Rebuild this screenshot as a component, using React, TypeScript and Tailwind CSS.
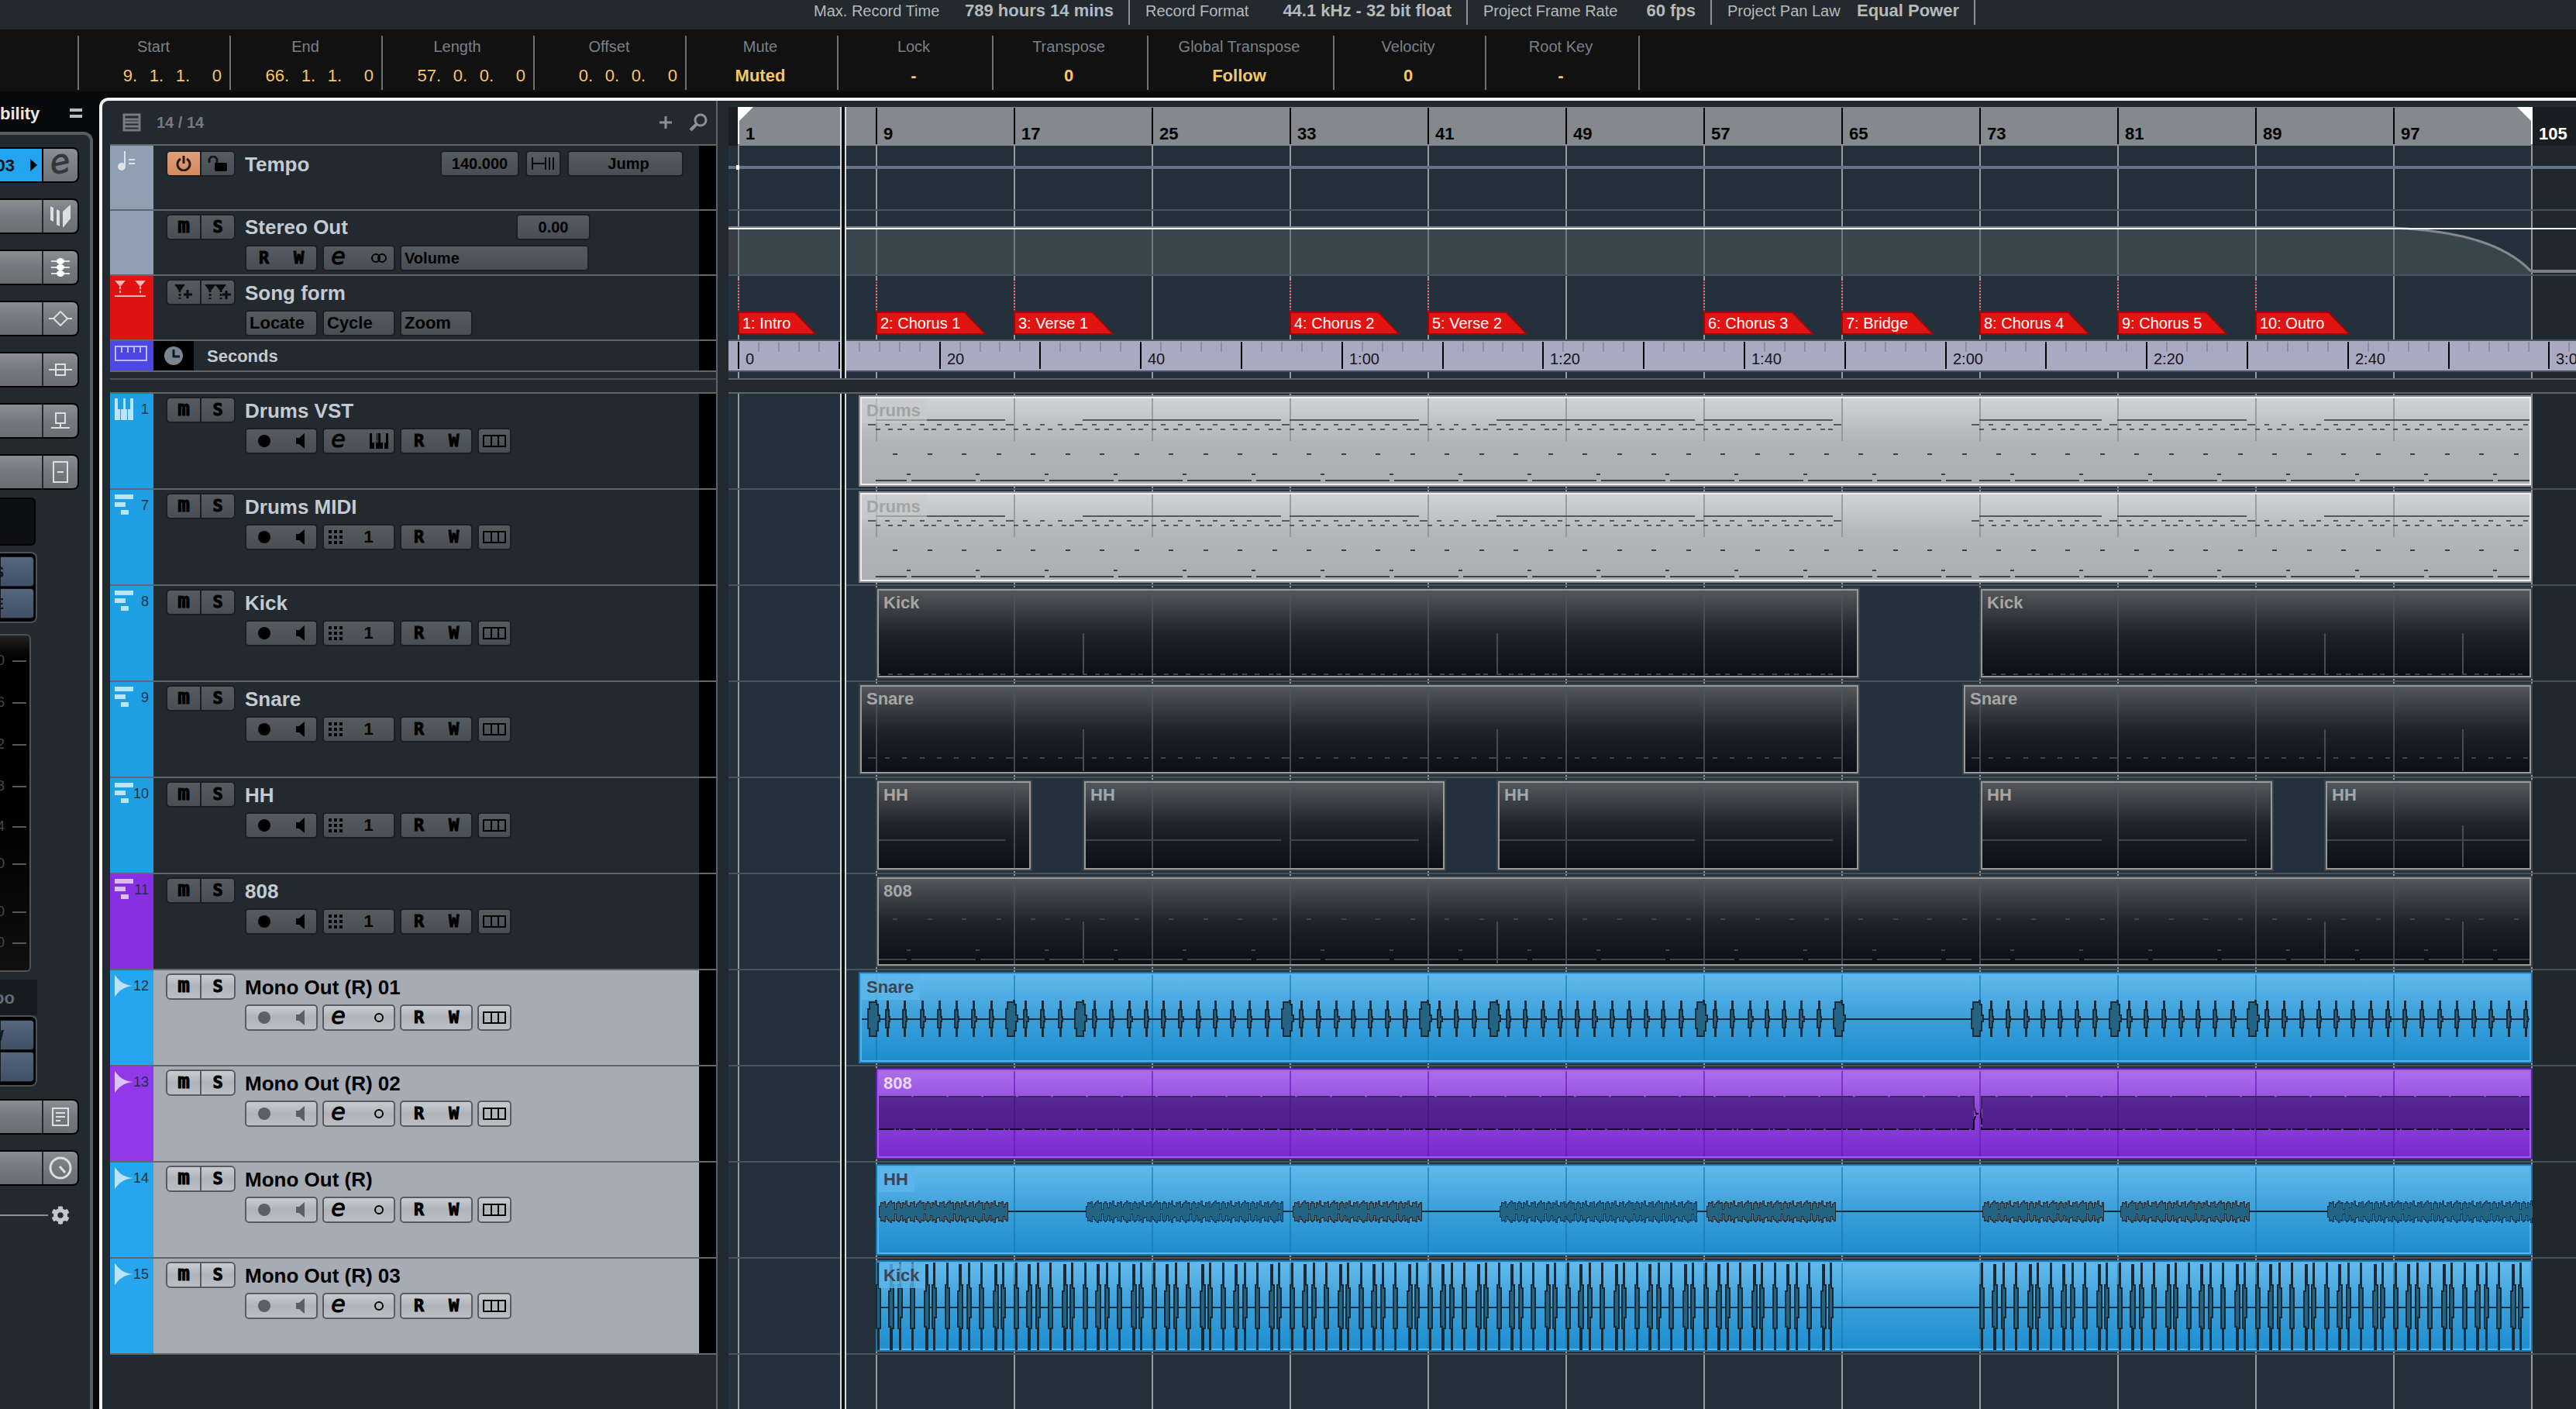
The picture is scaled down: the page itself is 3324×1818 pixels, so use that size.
// src/components/project/ProjectWindow.tsx
import type { ReactNode } from 'react'
import clsx from 'clsx'
import { FaCog } from 'react-icons/fa'

const BAR_WIDTH = 22.25
const ORIGIN = 12
const barX = (bar: number) => Math.round(ORIGIN + BAR_WIDTH * (bar - 1))
const BAR_MARKS = Array.from({ length: 14 }, (_, i) => 1 + i * 8)

type TrackKind = 'instrument' | 'midi' | 'audio'
type Pattern = 'drums' | 'kick' | 'snare' | 'hh' | '808'

interface ClipData {
  name: string
  from: number
  to: number
}

interface Track {
  id: number
  name: string
  kind: TrackKind
  purple?: boolean
  pattern: Pattern
  clips: ClipData[]
}

const tracks: Track[] = [
  { id: 1, name: 'Drums VST', kind: 'instrument', pattern: 'drums', clips: [{ name: 'Drums', from: 8, to: 105 }] },
  { id: 7, name: 'Drums MIDI', kind: 'midi', pattern: 'drums', clips: [{ name: 'Drums', from: 8, to: 105 }] },
  { id: 8, name: 'Kick', kind: 'midi', pattern: 'kick', clips: [{ name: 'Kick', from: 9, to: 66 }, { name: 'Kick', from: 73, to: 105 }] },
  { id: 9, name: 'Snare', kind: 'midi', pattern: 'snare', clips: [{ name: 'Snare', from: 8, to: 66 }, { name: 'Snare', from: 72, to: 105 }] },
  {
    id: 10, name: 'HH', kind: 'midi', pattern: 'hh',
    clips: [
      { name: 'HH', from: 9, to: 18 },
      { name: 'HH', from: 21, to: 42 },
      { name: 'HH', from: 45, to: 66 },
      { name: 'HH', from: 73, to: 90 },
      { name: 'HH', from: 93, to: 105 },
    ],
  },
  { id: 11, name: '808', kind: 'midi', purple: true, pattern: '808', clips: [{ name: '808', from: 9, to: 105 }] },
  { id: 12, name: 'Mono Out (R) 01', kind: 'audio', pattern: 'snare', clips: [{ name: 'Snare', from: 8, to: 105 }] },
  { id: 13, name: 'Mono Out (R) 02', kind: 'audio', purple: true, pattern: '808', clips: [{ name: '808', from: 9, to: 105 }] },
  { id: 14, name: 'Mono Out (R)', kind: 'audio', pattern: 'hh', clips: [{ name: 'HH', from: 9, to: 105 }] },
  { id: 15, name: 'Mono Out (R) 03', kind: 'audio', pattern: 'kick', clips: [{ name: 'Kick', from: 9, to: 105 }] },
]

const markers = [
  { bar: 1, label: '1: Intro' },
  { bar: 9, label: '2: Chorus 1' },
  { bar: 17, label: '3: Verse 1' },
  { bar: 33, label: '4: Chorus 2' },
  { bar: 41, label: '5: Verse 2' },
  { bar: 57, label: '6: Chorus 3' },
  { bar: 65, label: '7: Bridge' },
  { bar: 73, label: '8: Chorus 4' },
  { bar: 81, label: '9: Chorus 5' },
  { bar: 89, label: '10: Outro' },
]

const SECOND_LABELS = ['0', '20', '40', '1:00', '1:20', '1:40', '2:00', '2:20', '2:40', '3:00']

/* ---------- note and waveform data ---------- */

type Seg = [number, number]

const FILL_BARS = [8, 16, 20, 32, 40, 44, 56, 64, 72, 80, 88]
const SNARE_BARS = Array.from({ length: 97 }, (_, i) => i + 8).filter((b) => b <= 64 || b >= 72)
const HH_SEGMENTS: Seg[] = [[9, 16.5], [21, 32.5], [33, 40.5], [45, 56.5], [57, 64.5], [73, 80.1], [81, 88.5], [93, 105]]
const KICK_OFFSETS = [0, 16, 28, 44, 62, 72]

const snareNotes: Seg[] = SNARE_BARS.map((b) => [barX(b) + 12, FILL_BARS.includes(b) ? 10 : 6])
const kickNotes: Seg[] = Array.from({ length: 24 }, (_, i) => 9 + i * 4)
  .filter((b) => b < 65 || b >= 73)
  .flatMap((b) => KICK_OFFSETS.map((o): Seg => [barX(b) + o, 6]))
const hhNotes: Seg[] = HH_SEGMENTS.map(([a, b]) => [barX(a), barX(b) - barX(a)])
const subHigh: Seg[] = Array.from({ length: 48 }, (_, i) => [barX(9 + i * 2) + 22, 6])
const subMid: Seg[] = Array.from({ length: 24 }, (_, i) => [barX(9 + i * 4) + 40, 5])
const subLow: Seg[] = Array.from({ length: 24 }, (_, i) => 9 + i * 4).flatMap((b): Seg[] => [
  [barX(b), 40],
  [barX(b) + 46, b === 69 ? 33 : 43],
])

const noteRows: Record<Pattern, { y: number; notes: Seg[] }[]> = {
  drums: [
    { y: 30, notes: hhNotes },
    { y: 36, notes: snareNotes },
    { y: 42, notes: kickNotes },
    { y: 74, notes: subHigh },
    { y: 100, notes: subMid },
    { y: 108, notes: subLow },
  ],
  kick: [{ y: 110, notes: kickNotes }],
  snare: [{ y: 94, notes: snareNotes }],
  hh: [{ y: 76, notes: hhNotes }],
  '808': [
    { y: 54, notes: subHigh },
    { y: 94, notes: subMid },
    { y: 106, notes: subLow },
  ],
}

function rowPath(notes: Seg[], y: number, left: number, right: number) {
  return notes
    .filter(([x, w]) => x + w > left + 4 && x < right - 4)
    .map(([x, w]) => {
      const a = Math.max(x, left + 4)
      const b = Math.min(x + w, right - 4)
      return `M${a - left} ${y}H${b - left}v2H${a - left}z`
    })
    .join('')
}

function snareWave(left: number) {
  return SNARE_BARS.map((b, i) => {
    const x = barX(b) - left
    if (FILL_BARS.includes(b)) {
      return `M${x + 12} 48H${x + 14}V39H${x + 22}V37H${x + 23}V42H${x + 25}V56H${x + 27}V64H${x + 25}V76H${x + 23}V83H${x + 14}V73H${x + 12}z`
    }
    const t = x + 13
    const tail = i % 3 === 0 ? 5 : 4
    return `M${t} 49H${t + 2}V38H${t + 3}V49H${t + 4}V58H${t + tail + 1}V64H${t + 4}V72H${t + 3}V83H${t + 2}V72H${t}z`
  }).join('')
}

function kickWave(left: number) {
  return kickNotes
    .map(([nx], i) => {
      const x = nx + 1 - left
      const side = i % 3
      return side === 1
        ? `M${x} 40H${x + 2}V6H${x + 4}V32H${x + 6}V88H${x + 4}V115H${x + 2}V86H${x}z`
        : `M${x} 32H${x + 2}V4H${x + 3}V36H${x + 5}V${side ? 74 : 88}H${x + 3}V115H${x + 2}V88H${x}z`
    })
    .join('')
}

// outline made of short uneven steps, repeated every 38px
function hatWave(left: number) {
  const steps = [7, 12, 11, 13, 6, 10, 12, 14, 11, 12, 3, 11, 13, 11, 5, 12, 10, 14, 8]
  return HH_SEGMENTS.map(([a, b]) => {
    const x0 = barX(a) - left + 4
    const x1 = barX(b) - left + 2
    let top = `M${x0} 61`
    let bottom = ''
    for (let x = x0, i = 0; x < x1; x += 2, i++) {
      const h = steps[i % steps.length]
      top += `V${61 - h}H${x + 2}`
      bottom = `V${61 + h}H${x}` + bottom
    }
    return top + bottom + 'z'
  }).join('')
}

function Waveform({ pattern, left, width }: { pattern: Pattern; left: number; width: number }) {
  if (pattern === '808') {
    const gap = barX(73) - left
    return (
      <g>
        <path d={`M4 37H${gap - 7}V79H4z M${gap + 4} 37H${width - 4}V79H${gap + 4}z`} fill="#2c0d5c" fillOpacity="0.6" />
        <path d={`M4 37H${gap - 7}V50l3 9h6l1 -12V37H${width - 4}`} fill="none" stroke="#3b2a52" strokeWidth="2" strokeDasharray="42 3" />
        <path d={`M4 79H${gap - 7}V68l3 -9h6l1 12V79H${width - 4}`} fill="none" stroke="#170829" strokeWidth="2" strokeDasharray="20 2 4 2 16 3" />
      </g>
    )
  }
  const d = pattern === 'snare' ? snareWave(left) : pattern === 'kick' ? kickWave(left) : hatWave(left)
  return (
    <g>
      <path d={`M4 60H${width - 4}v2H4z`} fill="#1b2a34" />
      <path d={d} fill="#236484" stroke="#1a2a34" strokeWidth={pattern === 'hh' ? 1 : 2} />
    </g>
  )
}

const clipTheme = {
  light: {
    box: 'bg-linear-to-b from-[#d3d5d6] via-[#b3b4b6] to-[#abadb0] shadow-[inset_0_0_0_2px_#8b8d90,inset_0_0_0_4px_#eceeef]',
    text: 'text-[#a3a3a3]',
    line: '#8f9294',
  },
  dark: {
    box: 'bg-linear-to-b from-[#585c60] via-[#1f242a] to-[#0a0e14] shadow-[inset_0_0_0_2px_#3f4143,inset_0_0_0_4px_#98999b]',
    text: 'text-[#a6a6a6]',
    line: '#4a5664',
  },
  blue: {
    box: 'bg-linear-to-b from-[#65bbed] via-[#3a9fd9] via-50% to-[#1a8dcf] shadow-[inset_0_0_0_2px_#1d77a8,inset_0_0_0_4px_#52b5ef]',
    text: 'text-[#3f444a]',
    line: '#1474a8',
  },
  purple: {
    box: 'bg-linear-to-b from-[#ae70ee] via-[#8d42da] via-50% to-[#7828cc] shadow-[inset_0_0_0_2px_#5f22a0,inset_0_0_0_4px_#a45cf0]',
    text: 'text-[#e9dcf8]',
    line: '#6414b8',
  },
}

function Clip({ clip, track }: { clip: ClipData; track: Track }) {
  const left = barX(clip.from)
  const width = barX(clip.to) - left + 2
  const audio = track.kind === 'audio'
  const themeName = audio ? (track.purple ? 'purple' : 'blue') : track.pattern === 'drums' ? 'light' : 'dark'
  const theme = clipTheme[themeName]
  const noteColor = themeName === 'light' ? '#3c4043' : '#414448'
  const inner = BAR_MARKS.filter((b) => b > clip.from && b < clip.to)
  const sections = [21, 45, 93, 101].filter((b) => b > clip.from && b < clip.to)

  return (
    <div className={clsx('absolute top-[2px] h-[118px] overflow-hidden p-1', theme.box)} style={{ left, width }}>
      <svg width={width} height="118" className="absolute inset-0" shapeRendering="crispEdges" aria-hidden="true">
        {inner.map((b) => (
          <rect key={b} x={barX(b) - left} y="4" width="2" height={themeName === 'light' ? 55 : 110} fill={theme.line} fillOpacity={audio ? 0.6 : 0.8} />
        ))}
        {themeName === 'dark' &&
          sections.map((b) => <rect key={b} x={barX(b) - left} y="59" width="2" height="54" fill="#4a4b4e" />)}
        {audio ? (
          <Waveform pattern={track.pattern} left={left} width={width} />
        ) : (
          noteRows[track.pattern].map((row) => (
            <path key={row.y} d={rowPath(row.notes, row.y + 1, left, left + width)} fill={noteColor} fillOpacity={row.y < 50 && themeName === 'light' ? 0.8 : 1} />
          ))
        )}
      </svg>
      <span
        className={clsx(
          'relative inline-block pt-1 pr-2 pb-1 pl-1.5 text-[22px] leading-6 font-bold',
          themeName === 'blue' && 'bg-[#5ab5ea]/80',
          themeName === 'light' && 'bg-[#c8cacc]/60',
          theme.text,
        )}
      >
        {clip.name}
      </span>
    </div>
  )
}

/* ---------- icons ---------- */

function Icon({ w, h, children, className }: { w: number; h: number; children: ReactNode; className?: string }) {
  return (
    <svg width={w} height={h} viewBox={`0 0 ${w} ${h}`} fill="none" className={clsx('shrink-0', className)} aria-hidden="true">
      {children}
    </svg>
  )
}

const RecordIcon = () => (
  <Icon w={18} h={18}><circle cx="9" cy="9" r="8" fill="currentColor" /></Icon>
)
const MonitorIcon = () => (
  <Icon w={12} h={20}><path d="M0 6h4L11 0v20L4 14H0z" fill="currentColor" /></Icon>
)
const KeysIcon = () => (
  <Icon w={24} h={20}><path d="M0 0h3v12h3v8H0zM9 0h1v12h-1zM8 12h3V0h3v12h3v8H8zM19 12h2V0h3v20h-5z" fill="currentColor" /></Icon>
)
const GridIcon = () => (
  <Icon w={18} h={18}>
    <path d="M0 0h4v4H0zM7 0h4v4H7zM14 0h4v4h-4zM0 7h4v4H0zM7 7h4v4H7zM14 7h4v4h-4zM0 14h4v4H0zM7 14h4v4H7zM14 14h4v4h-4z" fill="currentColor" />
  </Icon>
)
const MonoIcon = () => (
  <Icon w={14} h={14}><circle cx="7" cy="7" r="5" stroke="currentColor" strokeWidth="2" /></Icon>
)
const StereoIcon = () => (
  <Icon w={22} h={14}>
    <circle cx="7" cy="7" r="5" stroke="currentColor" strokeWidth="2" />
    <circle cx="15" cy="7" r="5" stroke="currentColor" strokeWidth="2" />
  </Icon>
)
const LanesIcon = () => (
  <Icon w={30} h={16}><path d="M1 1h28v14H1zM11 1v14M20 1v14" stroke="currentColor" strokeWidth="2" /></Icon>
)

function StripIcon({ kind }: { kind: TrackKind }) {
  if (kind === 'instrument') {
    return (
      <Icon w={24} h={28}>
        <path d="M0 0h4v14h3v14H0zM8 14h3V0h3v14h2v14H8zM20 0h4v28h-7V14h3z" fill="currentColor" />
      </Icon>
    )
  }
  if (kind === 'midi') {
    return (
      <Icon w={24} h={28}><path d="M0 0h24v6H0zM0 10h14v6H0zM8 20h10v6H8z" fill="currentColor" /></Icon>
    )
  }
  return (
    <Icon w={24} h={28}><path d="M0 0C6 8 12 13 24 14C12 15 6 20 0 28z" fill="currentColor" /></Icon>
  )
}

const EditGlyph = ({ large }: { large?: boolean }) => (
  <span className={clsx("-rotate-12 font-['DejaVu_Sans'] italic [-webkit-text-stroke:1px]", large ? 'pb-2 text-[42px] leading-8' : 'pb-1 text-[30px] leading-6')}>e</span>
)

/* ---------- small controls ---------- */

const darkBox = 'border-2 border-[#1b1f23] bg-linear-to-b from-[#565b60] to-[#484e54] text-black'
const lightBox = 'border-2 border-[#595d62] bg-linear-to-b from-[#c9cdd2] via-[#b0b4b9] to-[#bcc0c5] text-black'

const Glyph = ({ children }: { children: string }) => (
  <span className={clsx("font-['DejaVu_Sans_Mono'] leading-6 font-bold [-webkit-text-stroke:1px]", children === 'm' ? 'pb-1 text-[26px]' : 'text-[22px]')}>{children}</span>
)

function PairButtons({ light, labels, children }: { light?: boolean; labels: [string, string]; children: [ReactNode, ReactNode] }) {
  return (
    <div className={clsx('flex h-[34px] w-[90px] shrink-0 rounded-md', light ? lightBox : darkBox)}>
      <button aria-label={labels[0]} className={clsx('flex flex-1 items-center justify-center border-r-2', light ? 'border-[#595d62]' : 'border-[#1b1f23]')}>
        {children[0]}
      </button>
      <button aria-label={labels[1]} className="flex flex-1 items-center justify-center">{children[1]}</button>
    </div>
  )
}

function ControlGroup({ light, labels, children }: { light?: boolean; labels: string[]; children: ReactNode[] }) {
  return (
    <div className={clsx('flex h-[34px] w-[94px] shrink-0 rounded-[5px]', light ? lightBox : darkBox)}>
      {children.map((child, i) => (
        <button key={i} aria-label={labels[i]} className="flex flex-1 items-center justify-center">{child}</button>
      ))}
    </div>
  )
}

function MuteSolo({ light }: { light?: boolean }) {
  return (
    <PairButtons light={light} labels={['Mute', 'Solo']}>
      <Glyph>m</Glyph>
      <Glyph>S</Glyph>
    </PairButtons>
  )
}

/* ---------- top bars ---------- */

const statusItems = [
  { label: 'Max. Record Time', value: '789 hours 14 mins', box: 'w-[408px]' },
  { label: 'Record Format', value: '44.1 kHz - 32 bit float', box: 'w-[436px]' },
  { label: 'Project Frame Rate', value: '60 fps', box: 'w-[315px]' },
  { label: 'Project Pan Law', value: 'Equal Power', box: 'w-[340px]' },
]

function StatusLine() {
  return (
    <div className="flex h-[38px] shrink-0 bg-[#23292d] pl-[1050px] text-[#b5babd]">
      {statusItems.map((item) => (
        <div key={item.label} className={clsx('flex h-8 items-start justify-between border-r-2 border-[#8b9094] pr-[19px] pl-5 leading-7 whitespace-nowrap first:pl-0', item.box)}>
          <span className="text-[20px]">{item.label}</span>
          <span className="text-[22px] font-bold">{item.value}</span>
        </div>
      ))}
    </div>
  )
}

const positionItems = [
  { label: 'Start', value: ['9.', '1.', '1.', '0'] },
  { label: 'End', value: ['66.', '1.', '1.', '0'] },
  { label: 'Length', value: ['57.', '0.', '0.', '0'] },
  { label: 'Offset', value: ['0.', '0.', '0.', '0'] },
]

const infoItems = [
  { label: 'Mute', value: 'Muted', box: 'w-[196px]' },
  { label: 'Lock', value: '-', box: 'w-[200px]' },
  { label: 'Transpose', value: '0', box: 'w-[200px]' },
  { label: 'Global Transpose', value: 'Follow', box: 'w-[240px]' },
  { label: 'Velocity', value: '0', box: 'w-[196px]' },
  { label: 'Root Key', value: '-', box: 'w-[200px]' },
]

function InfoLine() {
  return (
    <div className="flex h-20 shrink-0 bg-[#111111] pt-2 pl-[100px] whitespace-nowrap">
      {positionItems.map((item) => (
        <div key={item.label} className="h-[70px] w-[196px] border-l-2 border-[#6c7278] pr-2.5">
          <div className="pl-2 text-center text-[20px] leading-7 text-[#7a8289]">{item.label}</div>
          <div className="mt-2.5 flex justify-end text-right text-[22px] leading-7 text-[#f6c667]">
            {item.value.map((part, i) => (
              <span key={i} className={i === 3 ? 'w-[41px]' : 'w-[34px]'}>{part}</span>
            ))}
          </div>
        </div>
      ))}
      {infoItems.map((item) => (
        <div key={item.label} className={clsx('h-[70px] border-l-2 border-[#6c7278] pr-1 text-center last:border-r-2', item.box)}>
          <div className="text-[20px] leading-7 text-[#7a8289]">{item.label}</div>
          <div className="mt-2.5 text-[22px] leading-7 font-bold text-[#f6c667]">{item.value}</div>
        </div>
      ))}
    </div>
  )
}

/* ---------- inspector ---------- */

const inspectorIcons: { name: string; icon: ReactNode }[] = [
  {
    name: 'Expression',
    icon: <Icon w={28} h={30}><path d="M1 2l4 2v18l-4-2zM9 6l4 2v20l-4-2zM17 9L27 0v18L17 30z" fill="currentColor" /></Icon>,
  },
  {
    name: 'Equalizers',
    icon: (
      <Icon w={24} h={26}>
        <path d="M0 5h24M0 13h24M0 21h24" stroke="currentColor" strokeWidth="2" />
        <g fill="#fff">
          <ellipse cx="12" cy="5" rx="5" ry="4" />
          <ellipse cx="12" cy="13" rx="5" ry="4" />
          <ellipse cx="12" cy="21" rx="5" ry="4" />
        </g>
      </Icon>
    ),
  },
  {
    name: 'Inserts',
    icon: <Icon w={30} h={20}><path d="M0 10h6M24 10h6M15 1l9 9-9 9-9-9z" stroke="currentColor" strokeWidth="2" /></Icon>,
  },
  {
    name: 'Sends',
    icon: <Icon w={30} h={18}><path d="M0 9h30M9 2h12v14H9z" stroke="currentColor" strokeWidth="2" /></Icon>,
  },
  {
    name: 'Cue sends',
    icon: <Icon w={26} h={22}><path d="M7 1h12v13H7zM13 14v6M1 20h24" stroke="currentColor" strokeWidth="2" /></Icon>,
  },
  {
    name: 'Channel',
    icon: <Icon w={20} h={28}><path d="M1 1h18v26H1zM6 14h8" stroke="currentColor" strokeWidth="2" /></Icon>,
  },
]

function InspectorRow({ name, icon }: { name: string; icon: ReactNode }) {
  return (
    <button aria-label={name} className="mb-5 flex h-[46px] w-[102px] rounded-r-lg border-2 border-l-0 border-black bg-linear-to-b from-[#8a8d91] via-[#75787c] to-[#6a6d71]">
      <span className="flex-1 border-r-2 border-[#26292c]" />
      <span className="flex h-full w-11 items-center justify-center text-[#dcdee0]">{icon}</span>
    </button>
  )
}

const stateBox = 'flex h-[39px] w-full items-center justify-end rounded-r border border-[#151a20] bg-linear-to-b from-[#56677c] to-[#3f5067] pr-[38px] text-[20px] font-bold text-[#10151b]'
const scale = [
  { label: '0', box: 'h-[54px]' },
  { label: '6', box: 'h-[54px]' },
  { label: '2', box: 'h-[54px]' },
  { label: '8', box: 'h-[52px]' },
  { label: '4', box: 'h-[48px]' },
  { label: '0', box: 'h-[62px]' },
  { label: '0', box: 'h-[40px]' },
  { label: '0', box: 'h-[36px]' },
]

function Inspector() {
  return (
    <aside className="flex w-[128px] shrink-0 flex-col overflow-hidden bg-[#08090b]">
      <div className="flex h-[52px] items-center justify-between pr-[22px] pt-1">
        <h2 className="text-[22px] font-bold text-[#e6e8ea]">bility</h2>
        <Icon w={16} h={12}><path d="M0 2h16M0 10h16" stroke="#b9bcbf" strokeWidth="4" /></Icon>
      </div>
      <div className="mr-2 flex-1 rounded-tr-xl border-t-4 border-r-4 border-[#575d62] bg-[#22292f] pt-4">
        <div className="mb-5 flex h-[46px] w-[102px] rounded-r-lg border-2 border-l-0 border-black">
          <button className="flex w-14 items-center justify-end gap-5 border-r-2 border-black bg-[#22a5ee] pr-1.5 text-[22px] font-bold text-[#0c1318]">
            03
            <Icon w={9} h={16}><path d="M0 0l9 8-9 8z" fill="#000" /></Icon>
          </button>
          <button aria-label="Edit channel" className="flex flex-1 items-center justify-center rounded-r-md bg-linear-to-b from-[#8a8d91] to-[#6f7276] text-[#33373b]">
            <EditGlyph large />
          </button>
        </div>
        {inspectorIcons.map((row) => <InspectorRow key={row.name} {...row} />)}

        <div className="mt-[-10px] h-[62px] w-[46px] rounded-r-md border-2 border-l-0 border-black bg-[#0d0f13]" />
        <div className="mt-2 w-[48px] rounded-r-lg border-2 border-l-0 border-[#4b5156] bg-black py-1 pr-0.5">
          <button className={stateBox}>S</button>
          <button className={clsx(stateBox, 'mt-0.5')}>E</button>
        </div>
        <div className="mt-3.5 h-[436px] w-10 rounded-r-md border-2 border-l-0 border-[#4b5156] bg-linear-to-b from-[#242424] via-black via-10% to-[#101010] pt-[22px]">
          {scale.map((step, i) => (
            <div key={i} className={clsx('flex items-start justify-between pr-1', step.box)}>
              <span className="-ml-1 text-[18px] leading-5 text-[#45484b]">{step.label}</span>
              <span className="mt-2.5 h-0.5 w-[18px] bg-[#55585b]" />
            </div>
          ))}
        </div>
        <div className="mt-2.5 flex h-[46px] w-12 items-center bg-[#171a1f] text-[22px] font-bold text-[#666b70]">
          <span className="-ml-2">oo</span>
        </div>
        <div className="w-[48px] rounded-r-lg border-2 border-l-0 border-[#4b5156] bg-black py-1 pr-0.5">
          <button className={stateBox}>W</button>
          <button aria-label="Bypass" className={clsx(stateBox, 'mt-0.5')} />
        </div>
        <div className="mt-4">
          <InspectorRow
            name="Notepad"
            icon={<Icon w={22} h={24}><path d="M1 1h20v22H1zM5 7h12M5 12h12M5 17h6" stroke="currentColor" strokeWidth="2" /></Icon>}
          />
          <InspectorRow
            name="Quick controls"
            icon={<Icon w={32} h={32}><circle cx="16" cy="16" r="13" stroke="currentColor" strokeWidth="3" /><path d="M15 14l7 8" stroke="currentColor" strokeWidth="3" /></Icon>}
          />
        </div>
        <div className="mt-[26px] flex items-center">
          <span className="h-0.5 w-[62px] bg-[#8b8f93]" />
          <button aria-label="Inspector settings" className="ml-1 text-2xl text-[#c3c6c9]"><FaCog /></button>
        </div>
      </div>
    </aside>
  )
}

/* ---------- track list ---------- */

const nameText = 'text-[26px] leading-8 font-bold whitespace-nowrap'

function ListRow({ strip, height, light, icon, number, children }: { strip: string; height: string; light?: boolean; icon?: ReactNode; number?: number; children: ReactNode }) {
  return (
    <div className={clsx('flex border-b-2 border-[#62676d]', height)}>
      <div className={clsx('flex w-14 shrink-0 items-start justify-between pt-1.5 pr-1.5 pl-1.5', strip)}>
        {icon}
        {number !== undefined && <span className={clsx('pt-0.5 text-[18px] leading-6 text-[#22333f]', number > 9 && '-ml-1')}>{number}</span>}
      </div>
      <div className={clsx('flex min-w-0 flex-1', light ? 'bg-[#a7abb3] text-black' : 'text-[#c3cad1]')}>{children}</div>
      <div className="w-[22px] shrink-0 bg-black" />
    </div>
  )
}

function TrackRow({ track }: { track: Track }) {
  const light = track.kind === 'audio'
  const strip = track.purple
    ? light ? 'bg-[#9038ea] text-[#dcc2f8]' : 'bg-[#8730e1] text-[#d9bff5]'
    : light ? 'bg-[#26a6ec] text-[#bce3f9]' : 'bg-[#1f9fe3] text-[#bce3f8]'
  return (
    <ListRow strip={strip} height="h-[124px]" light={light} number={track.id} icon={<StripIcon kind={track.kind} />}>
      <div className="pt-1 pl-4"><MuteSolo light={light} /></div>
      <div className="pt-1.5 pl-3">
        <div className={nameText}>{track.name}</div>
        <div className="mt-1.5 flex gap-1.5 text-black">
          <ControlGroup light={light} labels={['Record enable', 'Monitor']}>
            <span className={light ? 'text-[#5c6064]' : 'text-black'}><RecordIcon /></span>
            <span className={light ? 'pl-1 text-[#5c6064]' : 'pl-1 text-black'}><MonitorIcon /></span>
          </ControlGroup>
          {track.kind === 'midi' ? (
            <ControlGroup light={light} labels={['Channel grid', 'MIDI channel']}>
              <span className="pr-4"><GridIcon /></span>
              <span className="pr-5 text-[22px] leading-6 font-bold">1</span>
            </ControlGroup>
          ) : (
            <ControlGroup light={light} labels={['Edit', track.kind === 'audio' ? 'Mono' : 'Open instrument']}>
              <span className="pr-2"><EditGlyph /></span>
              <span className="pl-1.5">{track.kind === 'audio' ? <MonoIcon /> : <KeysIcon />}</span>
            </ControlGroup>
          )}
          <ControlGroup light={light} labels={['Read automation', 'Write automation']}>
            <Glyph>R</Glyph>
            <Glyph>W</Glyph>
          </ControlGroup>
          <button aria-label="Show lanes" className={clsx('flex h-[34px] w-11 items-center justify-center rounded-[5px]', light ? lightBox : darkBox)}>
            <LanesIcon />
          </button>
        </div>
      </div>
    </ListRow>
  )
}

function TrackList() {
  return (
    <section className="w-[794px] shrink-0 border-r-2 border-[#5c6268] pl-2.5">
      <header className="flex h-[58px] items-center border-b-2 border-[#62676d] pr-2.5 pl-4 text-[#767b80]">
        <Icon w={24} h={24}><path d="M2 2h20v20H2zM2 8h20M2 12h20M2 17h20" stroke="currentColor" strokeWidth="3" /></Icon>
        <span className="ml-5 text-[20px] font-bold">14 / 14</span>
        <button aria-label="Add track" className="ml-auto text-[#8b9095]">
          <Icon w={18} h={18}><path d="M9 1v16M1 9h16" stroke="currentColor" strokeWidth="3" /></Icon>
        </button>
        <button aria-label="Find track" className="ml-5 text-[#8b9095]">
          <Icon w={26} h={26}><circle cx="16" cy="10" r="7" stroke="currentColor" strokeWidth="3" /><path d="M11 15l-8 8" stroke="currentColor" strokeWidth="4" /></Icon>
        </button>
      </header>

      <ListRow
        strip="bg-[#90a0b2] text-[#dde2e8]"
        height="h-[84px]"
        icon={<Icon w={28} h={28} className="ml-1"><ellipse cx="5" cy="21" rx="5" ry="5" fill="currentColor" /><path d="M9 1v20M14 12h8M14 17h8" stroke="currentColor" strokeWidth="2" /></Icon>}
      >
        <div className="pt-1.5 pl-4">
          <div className={clsx('flex h-[34px] w-[90px] rounded-md', darkBox)}>
            <button aria-label="Activate tempo track" className="flex flex-1 items-center justify-center rounded-l border-r-2 border-[#1b1f23] bg-linear-to-b from-[#e0a07a] to-[#d48a5e]">
              <Icon w={20} h={20}><path d="M6 4a8 8 0 1 0 8 0M10 0v10" stroke="#2b1a10" strokeWidth="3" /></Icon>
            </button>
            <button aria-label="Lock tempo track" className="flex flex-1 items-center justify-center">
              <Icon w={26} h={20}><path d="M2 9V6a5 5 0 0 1 10 0v4" stroke="#14171a" strokeWidth="3" /><rect x="9" y="9" width="16" height="11" rx="2" fill="#000" /></Icon>
            </button>
          </div>
        </div>
        <div className="w-[264px] pt-2 pl-3"><span className={nameText}>Tempo</span></div>
        <div className="flex gap-2 pt-1.5 text-[20px] font-bold text-black">
          <input aria-label="Tempo" defaultValue="140.000" className={clsx('h-[34px] w-[102px] rounded-[5px] text-center', darkBox)} />
          <button aria-label="Tempo curve type" className={clsx('flex h-[34px] w-[46px] items-center justify-center rounded-[5px]', darkBox)}>
            <Icon w={32} h={20}><path d="M2 2v16M2 10h16M19 2v16M24 2v16M29 2v16" stroke="#0b0d0f" strokeWidth="2" /></Icon>
          </button>
          <button className={clsx('h-[34px] w-[150px] rounded-[5px] pl-2', darkBox)}>Jump</button>
        </div>
      </ListRow>

      <ListRow strip="bg-[#90a0b2]" height="h-[84px]">
        <div className="pt-1 pl-4"><MuteSolo /></div>
        <div className="pt-1 pl-3">
          <div className="flex w-[446px] items-center justify-between">
            <span className={nameText}>Stereo Out</span>
            <input aria-label="Volume value" defaultValue="0.00" className={clsx('h-[34px] w-[96px] rounded-[5px] text-center text-[20px] font-bold', darkBox)} />
          </div>
          <div className="mt-1.5 flex gap-1.5 text-black">
            <ControlGroup labels={['Read automation', 'Write automation']}>
              <Glyph>R</Glyph>
              <Glyph>W</Glyph>
            </ControlGroup>
            <ControlGroup labels={['Edit', 'Stereo']}>
              <span className="pr-2"><EditGlyph /></span>
              <span className="pl-1.5"><StereoIcon /></span>
            </ControlGroup>
            <select aria-label="Automation parameter" className={clsx('h-[34px] w-[244px] appearance-none rounded-[5px] px-1 text-[20px] leading-6 font-bold', darkBox)}>
              <option>Volume</option>
            </select>
          </div>
        </div>
      </ListRow>

      <ListRow
        strip="bg-[#e11212] text-[#f7b5b5]"
        height="h-[84px]"
        icon={<Icon w={40} h={22}><path d="M0 0h14L7 8zM26 0h14l-7 8z" fill="currentColor" /><path d="M7 8v9M33 8v9" stroke="currentColor" strokeWidth="2" strokeDasharray="3 2" /><path d="M0 20h40" stroke="currentColor" strokeWidth="2" /></Icon>}
      >
        <div className="pt-1 pl-4">
          <PairButtons labels={['Add marker', 'Add cycle marker']}>
            <Icon w={24} h={22}><path d="M0 1h14L9 8H5z" fill="#0b0d0f" /><path d="M7 8v12" stroke="#0b0d0f" strokeWidth="3" strokeDasharray="3 2" /><path d="M17 8v11M12 14h11" stroke="#0b0d0f" strokeWidth="3" /></Icon>
            <Icon w={34} h={22}><path d="M0 1h28l-5 7h-4l-5-6-5 6H5z" fill="#0b0d0f" /><path d="M7 8v12M21 8v12" stroke="#0b0d0f" strokeWidth="3" strokeDasharray="3 2" /><path d="M28 9v11M23 14h11" stroke="#0b0d0f" strokeWidth="3" /></Icon>
          </PairButtons>
        </div>
        <div className="pt-1.5 pl-3">
          <div className={nameText}>Song form</div>
          <div className="mt-1.5 flex gap-1.5 text-black">
            {['Locate', 'Cycle', 'Zoom'].map((label) => (
              <button key={label} className={clsx('h-[34px] w-[94px] rounded-[5px] px-1 text-left text-[22px] leading-6 font-bold', darkBox)}>{label}</button>
            ))}
          </div>
        </div>
      </ListRow>

      <ListRow
        strip="bg-[#4d47e4] text-[#bdbbf6]"
        height="h-10"
        icon={<Icon w={42} h={20}><path d="M1 1h40v18H1zM9 1v8M17 1v8M25 1v8M33 1v8" stroke="currentColor" strokeWidth="2" /></Icon>}
      >
        <div className="flex h-full w-[52px] items-center justify-center bg-black">
          <Icon w={24} h={24}><circle cx="12" cy="12" r="12" fill="#7b8490" /><path d="M12 4v9h8" stroke="#16191d" strokeWidth="3" /></Icon>
        </div>
        <span className="pt-1 pl-[17px] text-[22px] leading-8 font-bold">Seconds</span>
      </ListRow>

      <div className="h-2.5 border-b-2 border-[#4c5258]" />
      <div className="h-[18px] border-b-2 border-[#62676d]" />
      {tracks.map((track) => <TrackRow key={track.id} track={track} />)}
    </section>
  )
}

/* ---------- timeline ---------- */

const laneLine = 'border-b-2 border-[#48525a]'

function GridLines() {
  return (
    <div className="absolute inset-0">
      <div className="absolute inset-y-0 right-0 bg-[#21272f]" style={{ left: barX(105) + 2 }} />
      {BAR_MARKS.map((bar) => (
        <div key={bar} className="absolute inset-y-0 w-0.5 bg-[#959a9f]" style={{ left: barX(bar) }} />
      ))}
    </div>
  )
}

const Playhead = () => (
  <div className="absolute inset-y-0 left-[144px] w-2 border-x-2 border-[#d9dbdc] bg-[#0b0e11]" />
)

function BarRuler() {
  return (
    <div className="relative h-[50px] bg-[#1a1e22]">
      <div className="absolute inset-y-0 bg-[#85888c]" style={{ left: barX(1), width: barX(105) - barX(1) + 2 }} />
      {BAR_MARKS.map((bar) => (
        <div
          key={bar}
          className={clsx('absolute top-px h-[47px] border-l-2 pt-[22px] pl-2 text-[22px] leading-6 font-bold', bar === 105 ? 'border-white text-white' : bar === 1 ? 'border-white text-black' : 'border-black text-black')}
          style={{ left: barX(bar) }}
        >
          {bar}
        </div>
      ))}
      <div className="absolute top-0 h-5 w-5 bg-white [clip-path:polygon(0_0,100%_0,0_100%)]" style={{ left: barX(1) }} />
      <div className="absolute top-0 h-5 w-5 bg-white [clip-path:polygon(0_0,100%_0,100%_100%)]" style={{ left: barX(105) - 18 }} />
      <Playhead />
    </div>
  )
}

function MarkerFlag({ bar, label }: { bar: number; label: string }) {
  return (
    <div className="absolute top-1.5" style={{ left: barX(bar) }}>
      <div className="h-10 w-0 border-l-2 border-dotted border-[#9c1a20]" />
      <button className="block bg-[#980909] p-0.5 [clip-path:polygon(0_0,calc(100%-28px)_0,100%_100%,0_100%)]">
        <span className="block bg-[#e21313] pr-8 pl-1 text-[20px] leading-[26px] whitespace-nowrap text-white [clip-path:polygon(0_0,calc(100%-27px)_0,calc(100%-2px)_100%,0_100%)]">
          {label}
        </span>
      </button>
    </div>
  )
}

function SecondsRuler() {
  return (
    <div className="relative h-10 overflow-hidden border-b-2 border-[#48525a] bg-[#a9a9c2]">
      {Array.from({ length: 92 }, (_, i) => (
        <div
          key={i}
          className={clsx('absolute top-px w-0.5', i % 5 === 0 ? 'h-[35px] bg-black' : 'h-[13px] bg-[#8c8ca2]')}
          style={{ left: Math.round(ORIGIN + i * 25.96) }}
        />
      ))}
      {SECOND_LABELS.map((label, i) => (
        <span key={label} className="absolute top-[11px] text-[20px] leading-6 text-[#16161d]" style={{ left: Math.round(ORIGIN + i * 259.6 + 10) }}>
          {label}
        </span>
      ))}
    </div>
  )
}

function Timeline() {
  return (
    <section className="flex min-w-0 flex-1 flex-col overflow-hidden pt-2 pl-3.5">
      <BarRuler />
      <div className="relative border-b-2 border-[#5c6268] bg-[#24313c] pb-2">
        <GridLines />
        <div className={clsx('relative h-[84px] pt-[26px]', laneLine)}>
          <div className="h-1 bg-[#667586]" />
          <div className="absolute top-[25px] left-[10px] h-1.5 w-1 bg-white" />
        </div>
        <div className={clsx('relative h-[84px]', laneLine)}>
          <svg width="100%" height="82" className="block" aria-hidden="true">
            <path d={`M0 24H${barX(97)}C${barX(97) + 90} 26 ${barX(97) + 145} 44 ${barX(105)} 78V82H0z`} fill="#4e595b" fillOpacity="0.5" />
            <rect x="0" y="24" width="12" height="58" fill="#383b45" />
            <rect x="0" y="20" width={barX(97)} height="2" fill="#7c8286" />
            <path d={`M${barX(97)} 22C${barX(97) + 90} 26 ${barX(97) + 145} 44 ${barX(105)} 78`} fill="none" stroke="#85898c" strokeWidth="3" />
            <rect x={barX(105)} y="76" width="100%" height="4" fill="#7c8084" />
            <rect x="0" y="22" width="100%" height="2" fill="#f4f5f5" />
          </svg>
        </div>
        <div className={clsx('relative h-[84px]', laneLine)}>
          {markers.map((marker) => <MarkerFlag key={marker.bar} {...marker} />)}
        </div>
        <SecondsRuler />
        <Playhead />
      </div>
      <div className="h-[18px] shrink-0 border-b-2 border-[#5c6268]" />
      <div className="relative flex-1 bg-[#24313c]">
        <GridLines />
        {tracks.map((track) => (
          <div key={track.id} className={clsx('relative h-[124px]', laneLine)}>
            {track.clips.map((clip) => <Clip key={clip.from} clip={clip} track={track} />)}
          </div>
        ))}
        <Playhead />
      </div>
    </section>
  )
}

export default function App() {
  return (
    <div className="flex h-screen flex-col overflow-hidden bg-[#08090b] font-['Liberation_Sans',Arial,sans-serif]">
      <StatusLine />
      <InfoLine />
      <main className="flex min-h-0 flex-1">
        <Inspector />
        <div className="mt-2 flex min-w-0 flex-1 overflow-hidden rounded-tl-xl border-t-4 border-l-4 border-[#f2f4f4] bg-[#22292f]">
          <TrackList />
          <Timeline />
        </div>
      </main>
    </div>
  )
}
